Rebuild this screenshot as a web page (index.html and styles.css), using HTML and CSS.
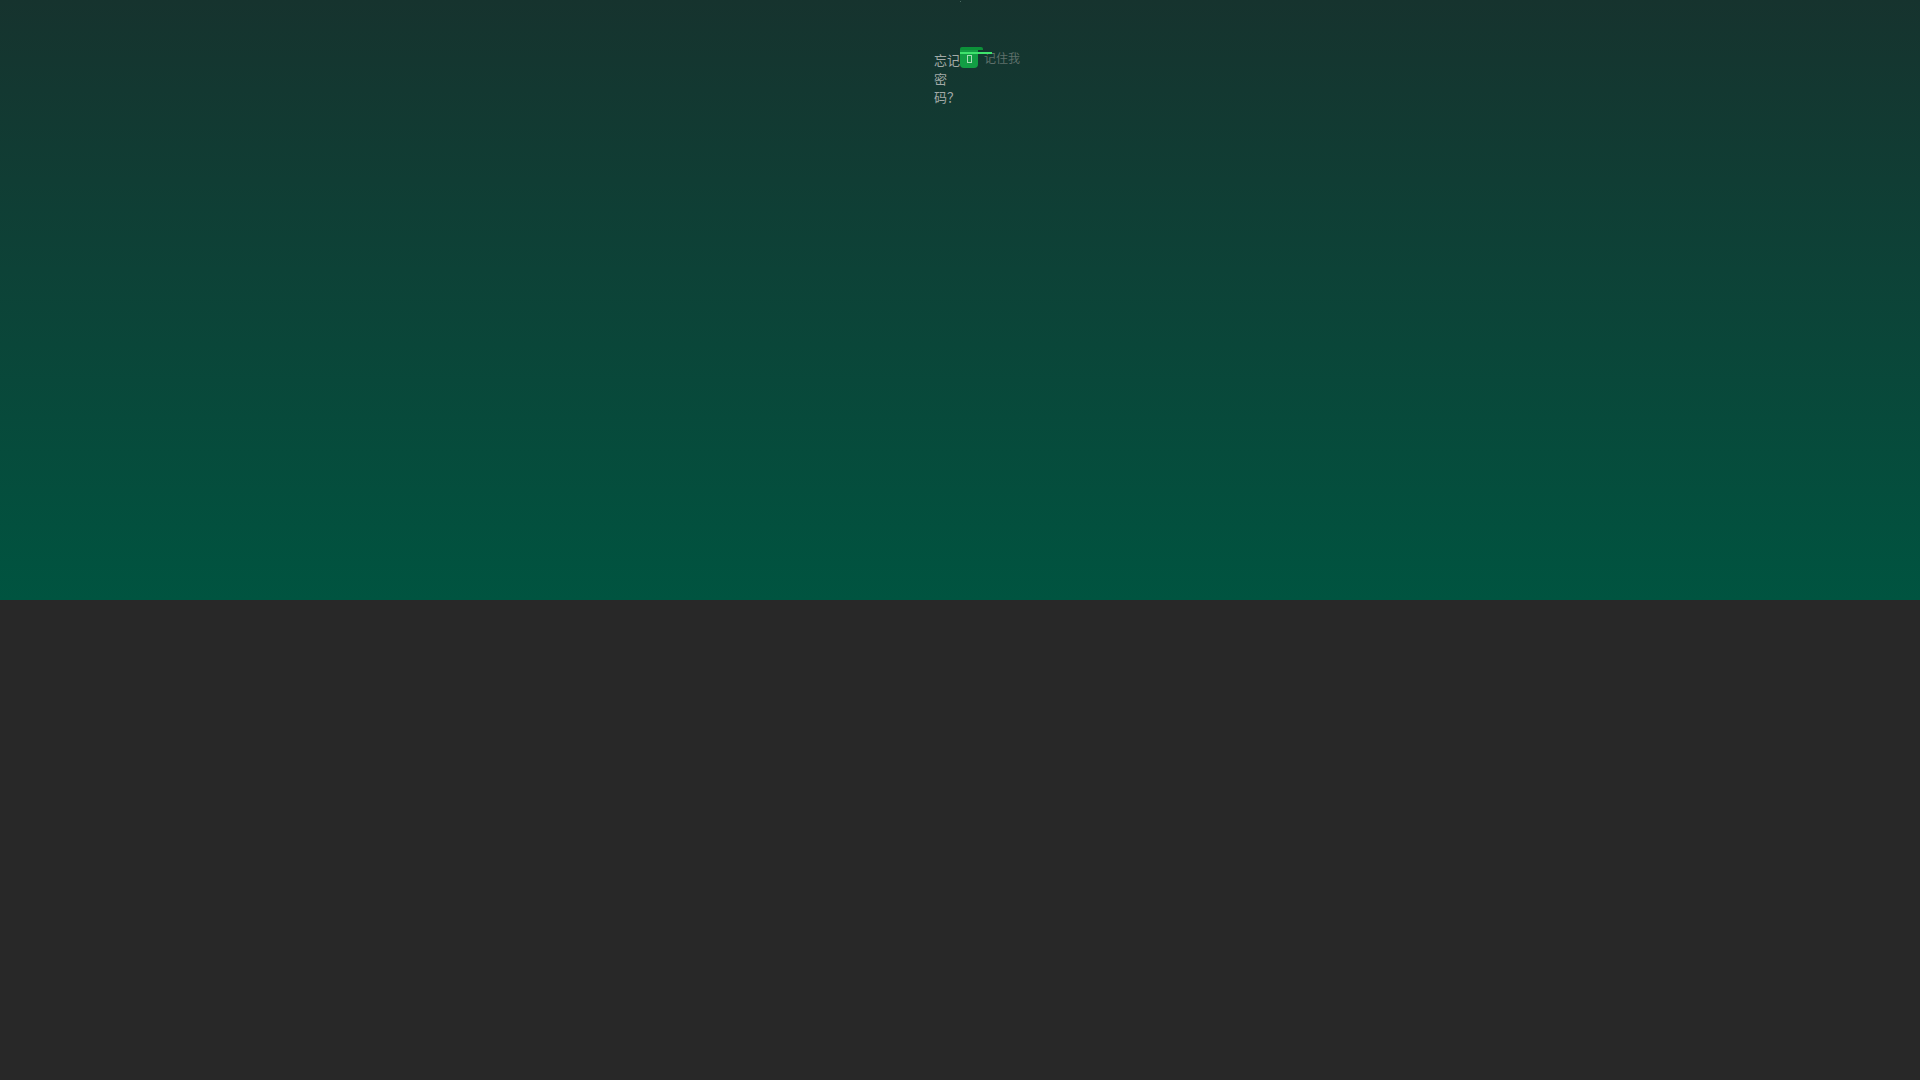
FILE: index.html
```html
<!DOCTYPE html>
<html lang="zh">
<head>
<meta charset="utf-8">
<title>登录</title>
<link rel="stylesheet" href="styles.css">
</head>
<body>
<div class="hero">
  <div class="dot"></div>
  <div class="form-row">
    <a class="forgot">忘记密码？</a>
    <label class="remember">
      <span class="check">
        <span class="tab"></span>
        <span class="line"></span>
        <span class="box"><span class="tofu"></span></span>
      </span>
      <span class="remember-text">记住我</span>
    </label>
  </div>
</div>
<div class="bottom"></div>
</body>
</html>
```
FILE: styles.css
```css
html, body {
  margin: 0;
  padding: 0;
  width: 1920px;
  height: 1080px;
  overflow: hidden;
  background: #282828;
  font-family: "Noto Sans CJK TC", "Noto Sans CJK SC", sans-serif;
}
.hero {
  height: 600px;
  background: linear-gradient(to bottom, #16332e 0%, #0d4237 45%, #005440 100%);
  position: relative;
}
.dot {
  position: absolute;
  left: 960px;
  top: 1px;
  width: 1px;
  height: 1px;
  background: #4a6a62;
}
.form-row {
  display: flex;
  align-items: flex-start;
  padding-left: 934px;
  padding-top: 47px;
}
.forgot {
  width: 26px;
  font-size: 13px;
  line-height: 18.5px;
  color: #a3aaa7;
  margin-top: 4px;
  word-break: break-all;
}
.remember {
  display: flex;
  align-items: flex-start;
}
.check {
  position: relative;
  width: 18px;
  height: 21px;
  display: flex;
  flex-direction: column;
}
.tab {
  width: 23px;
  height: 3px;
  background: #0c9139;
  border-radius: 2px 2px 0 0;
}
.box {
  flex: 1;
  background: #129e44;
  border-radius: 0 0 4px 4px;
  display: flex;
  justify-content: center;
  padding-top: 5px;
  box-sizing: border-box;
}
.tofu {
  width: 3px;
  height: 6px;
  border: 1px solid #a6dcb6;
}
.line {
  position: absolute;
  left: 0;
  top: 5px;
  width: 32px;
  height: 2px;
  background: #3fe36d;
}
.remember-text {
  font-size: 12px;
  line-height: 16px;
  color: #5f706b;
  margin-left: 6px;
  margin-top: 3px;
}
```
